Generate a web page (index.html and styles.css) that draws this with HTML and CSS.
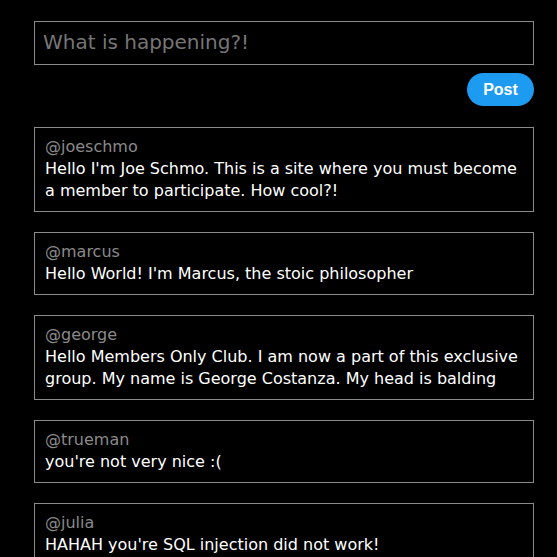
FILE: index.html
```html
<!DOCTYPE html>
<html lang="en">
<head>
<meta charset="utf-8">
<title>Members Only</title>
<link rel="stylesheet" href="styles.css">
</head>
<body>
<main class="feed">
  <form class="composer">
    <input class="composer-input" type="text" placeholder="What is happening?!">
    <div class="composer-actions">
      <button class="post-btn" type="button">Post</button>
    </div>
  </form>
  <ul class="posts">
    <li class="post">
      <div class="post-user">@joeschmo</div>
      <div class="post-text">Hello I'm Joe Schmo. This is a site where you must become a member to participate. How cool?!</div>
    </li>
    <li class="post">
      <div class="post-user">@marcus</div>
      <div class="post-text">Hello World! I'm Marcus, the stoic philosopher</div>
    </li>
    <li class="post">
      <div class="post-user">@george</div>
      <div class="post-text">Hello Members Only Club. I am now a part of this exclusive group. My name is George Costanza. My head is balding</div>
    </li>
    <li class="post">
      <div class="post-user">@trueman</div>
      <div class="post-text">you're not very nice :(</div>
    </li>
    <li class="post">
      <div class="post-user">@julia</div>
      <div class="post-text">HAHAH you're SQL injection did not work!</div>
    </li>
  </ul>
</main>
</body>
</html>
```
FILE: styles.css
```css
html, body {
  margin: 0;
  padding: 0;
  background: #000;
  color: #fff;
  font-family: "DejaVu Sans", sans-serif;
}
.feed {
  width: 500px;
  padding: 21px 0 0 34px;
}
.composer {
  display: flex;
  flex-direction: column;
  gap: 8px;
  margin: 0;
}
.composer-input {
  box-sizing: border-box;
  width: 500px;
  height: 44px;
  background: #000;
  border: 1px solid #8a8a8a;
  padding: 0 8px 3px;
  font-family: "DejaVu Sans", sans-serif;
  font-size: 20px;
  color: #fff;
  outline: none;
  margin: 0;
}
.composer-input::placeholder {
  color: #767676;
}
.composer-actions {
  display: flex;
  justify-content: flex-end;
}
.post-btn {
  width: 67px;
  height: 33px;
  border: none;
  border-radius: 17px;
  background: #1d9bf0;
  color: #fff;
  font-family: "Liberation Sans", Arial, sans-serif;
  font-weight: bold;
  font-size: 16px;
  padding: 0;
}
.posts {
  list-style: none;
  margin: 21px 0 0;
  padding: 0;
  display: flex;
  flex-direction: column;
  gap: 20.6px;
}
.post {
  border: 1px solid #8a8a8a;
  padding: 7px 10px 8.5px;
  font-size: 16px;
}
.post-user {
  color: #8a8a8a;
  line-height: 23px;
}
.post-text {
  color: #fff;
  line-height: 22px;
}
```
